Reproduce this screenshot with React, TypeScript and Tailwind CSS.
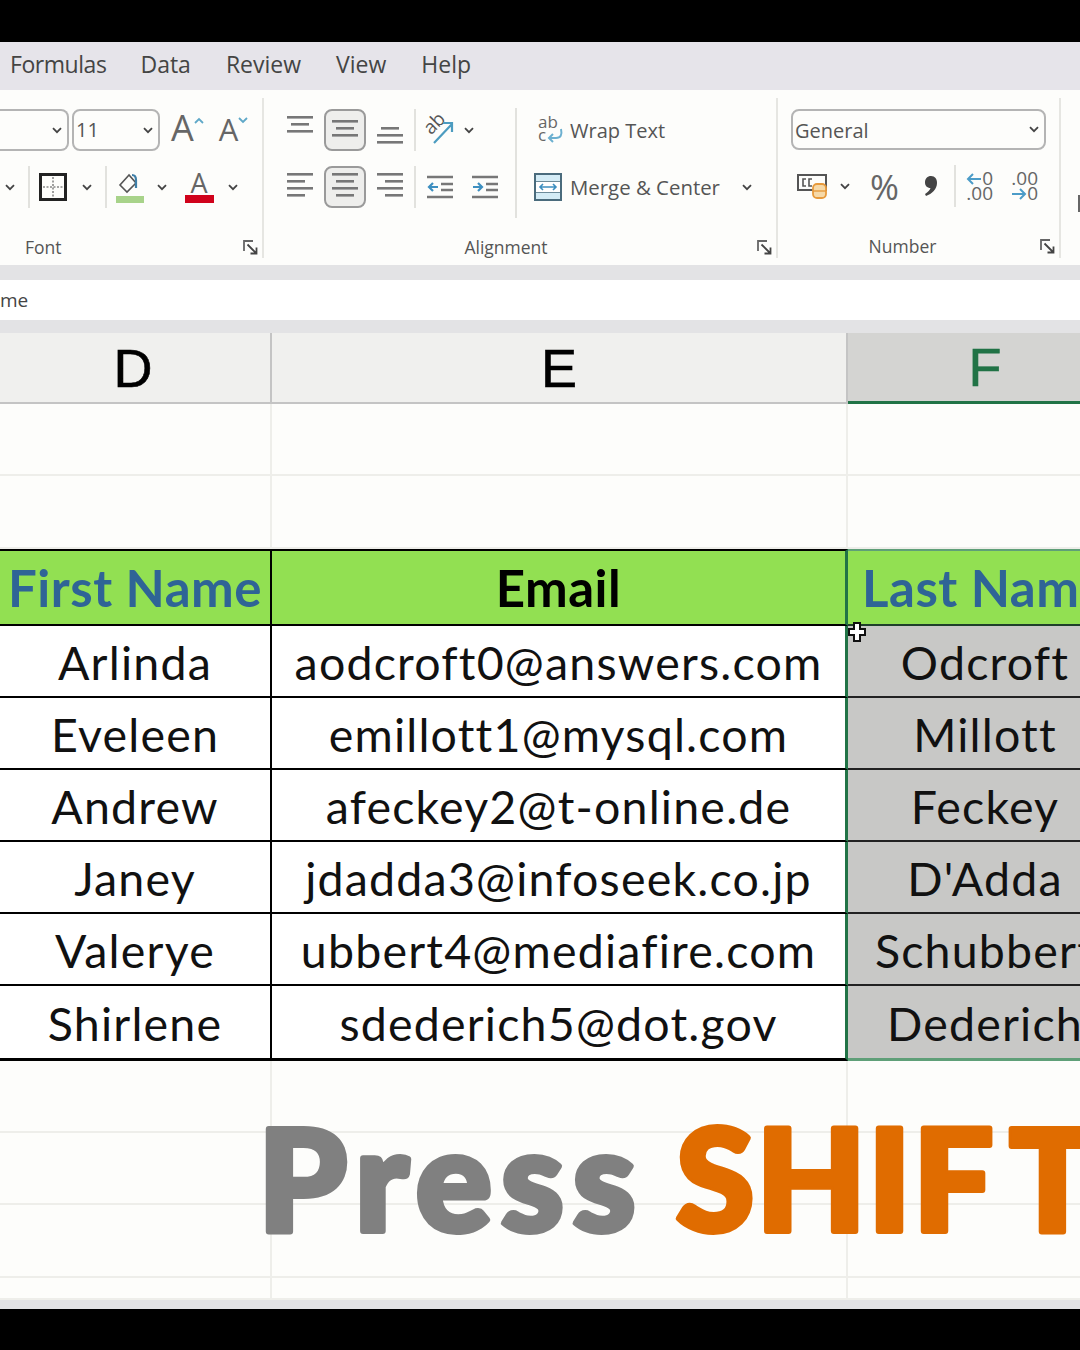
import React from 'react';

const Chevron = ({ className = '' }: { className?: string }) => (
  <svg width="10" height="7" viewBox="0 0 10 7" className={`shrink-0 ${className}`}>
    <path d="M1 1.2 L5 5.2 L9 1.2" fill="none" stroke="#444" strokeWidth="1.8" />
  </svg>
);

const Launcher = () => (
  <svg width="15" height="15" viewBox="0 0 15 15">
    <path d="M10 1 H1 V11" fill="none" stroke="#666" strokeWidth="1.8" />
    <path d="M4.5 4.5 L13.5 13.5 M13.5 7.5 V13.5 H7.5" fill="none" stroke="#444" strokeWidth="1.8" />
  </svg>
);

const Lines = ({ rows }: { rows: [number, number][] }) => (
  <svg width="26" height={rows.length * 7 + 2} viewBox={`0 0 26 ${rows.length * 7 + 2}`}>
    {rows.map(([x, w], i) => (
      <rect key={i} x={x} y={i * 7 + 1} width={w} height="2.6" fill="#777" />
    ))}
  </svg>
);

const Sep = ({ className = 'h-[42px]' }: { className?: string }) => <div className={`w-0.5 shrink-0 bg-[#e2e2de] ${className}`} />;

const Boxed = ({ children }: { children: React.ReactNode }) => (
  <div className="w-[42px] h-[42px] rounded-lg border-2 border-[#9a9a9a] bg-[#eeeeec] flex items-center justify-center">{children}</div>
);

const FontGroup = () => (
  <div className="w-[264px] h-[160px] mt-2 shrink-0 flex flex-col border-r-2 border-[#e6e6e2]">
    <div className="flex items-center h-[42px] mt-[11px]">
      <div className="w-[69px] h-[42px] rounded-r-lg border-2 border-l-0 border-[#b4b4b4] flex items-center justify-end pr-[5px] shrink-0">
        <Chevron />
      </div>
      <div className="w-[88px] h-[42px] ml-[3px] rounded-lg border-2 border-[#b4b4b4] flex items-center justify-between pl-[2px] pr-[5px] shrink-0">
        <span className="text-[20px] text-[#555]">11</span>
        <Chevron />
      </div>
      <span className="ml-[11px] mb-[5px] text-[36px] leading-none text-[#666]">A</span>
      <svg width="10" height="7" viewBox="0 0 10 7" className="mb-5">
        <path d="M1 6 L5 2 L9 6" fill="none" stroke="#5fa8c8" strokeWidth="1.8" />
      </svg>
      <span className="ml-[15px] mb-[1px] text-[31px] leading-none text-[#666]">A</span>
      <svg width="10" height="7" viewBox="0 0 10 7" className="mb-5">
        <path d="M1 1 L5 5 L9 1" fill="none" stroke="#5fa8c8" strokeWidth="1.8" />
      </svg>
    </div>
    <div className="flex items-center h-[42px] mt-[15px]">
      <Chevron className="ml-[5px]" />
      <Sep className="h-[42px] ml-[13px]" />
      <svg width="28" height="28" viewBox="0 0 28 28" className="ml-[9px]">
        <rect x="1.5" y="1.5" width="25" height="25" fill="none" stroke="#222" strokeWidth="3" />
        <path d="M14 4 V24 M4 14 H24" stroke="#888" strokeWidth="1.6" strokeDasharray="2 1.5" />
      </svg>
      <Chevron className="ml-[15px]" />
      <Sep className="h-[42px] ml-[13px]" />
      <div className="ml-[8px] w-[30px] flex flex-col items-center">
        <svg width="26" height="24" viewBox="0 0 26 24">
          <path d="M12 3 L3 13 L10 20 L19 11 Z" fill="none" stroke="#555" strokeWidth="1.6" />
          <path d="M19 16 V8 Q19 3 15 3" fill="none" stroke="#3f7fa8" strokeWidth="2.2" />
        </svg>
        <div className="w-7 h-[7px] bg-[#a8d38a]" />
      </div>
      <Chevron className="ml-[12px]" />
      <div className="ml-[17px] w-[30px] flex flex-col items-center">
        <span className="text-[27px] leading-[24px] text-[#666]">A</span>
        <div className="w-[29px] h-2 bg-[#d0021b]" />
      </div>
      <Chevron className="ml-[14px]" />
    </div>
    <div className="flex items-center justify-between mt-[27px] pl-[25px] pr-[4px]">
      <span className="text-[17.5px] leading-6 text-[#555]">Font</span>
      <Launcher />
    </div>
  </div>
);

const AlignmentGroup = () => (
  <div className="w-[514px] h-[160px] mt-2 shrink-0 flex flex-col border-r-2 border-[#e6e6e2]">
    <div className="flex h-[99px] mt-[11px]">
      <div className="flex flex-col w-[150px] pl-[23px] shrink-0">
        <div className="flex h-[42px]">
          <div className="pt-[6px]"><Lines rows={[[0, 26], [4, 18], [0, 26]]} /></div>
          <div className="ml-[11px]"><Boxed><Lines rows={[[0, 26], [4, 18], [0, 26]]} /></Boxed></div>
          <div className="ml-[11px] pt-[17px]"><Lines rows={[[4, 18], [0, 26], [0, 26]]} /></div>
        </div>
        <div className="flex h-[42px] items-center mt-[15px]">
          <Lines rows={[[0, 26], [0, 18], [0, 26], [0, 18]]} />
          <div className="ml-[11px]"><Boxed><Lines rows={[[0, 26], [4, 18], [0, 26], [4, 18]]} /></Boxed></div>
          <div className="ml-[11px]"><Lines rows={[[0, 26], [8, 18], [0, 26], [8, 18]]} /></div>
        </div>
      </div>
      <div className="flex flex-col shrink-0">
        <Sep />
        <Sep className="h-[42px] mt-[15px]" />
      </div>
      <div className="flex flex-col w-[99px] shrink-0 pl-[8px]">
        <div className="flex items-center h-[42px]">
          <svg width="32" height="34" viewBox="0 0 32 34" className="overflow-visible">
            <text x="0" y="18" fontSize="19" fill="#555" transform="rotate(-45 9 12)" fontFamily="Open Sans">ab</text>
            <path d="M10 30 L28 11 M19 10 H28 V19" fill="none" stroke="#4c9cc0" strokeWidth="2.2" />
          </svg>
          <Chevron className="ml-[8px]" />
        </div>
        <div className="flex items-center h-[42px] mt-[15px] pl-[3px]">
          <svg width="26" height="26" viewBox="0 0 26 26">
            <path d="M0 3 H26 M14 10 H26 M14 16 H26 M0 23 H26" stroke="#777" strokeWidth="2.6" />
            <path d="M11 13 H2 M6 9 L2 13 L6 17" fill="none" stroke="#3d8fc0" strokeWidth="2.2" />
          </svg>
          <svg width="26" height="26" viewBox="0 0 26 26" className="ml-[19px]">
            <path d="M0 3 H26 M14 10 H26 M14 16 H26 M0 23 H26" stroke="#777" strokeWidth="2.6" />
            <path d="M1 13 H10 M6 9 L10 13 L6 17" fill="none" stroke="#3d8fc0" strokeWidth="2.2" />
          </svg>
        </div>
      </div>
      <Sep className="h-[110px] -mt-px" />
      <div className="flex flex-col pl-[17px]">
        <div className="flex items-center h-[42px]">
          <svg width="28" height="30" viewBox="0 0 28 30" className="ml-[3px] overflow-visible">
            <text x="1" y="13" fontSize="17" fill="#666" fontFamily="Open Sans">ab</text>
            <text x="1" y="26" fontSize="17" fill="#666" fontFamily="Open Sans">c</text>
            <path d="M24 14 Q26 23 19 23 H12 M16 19 L12 23 L16 27" fill="none" stroke="#6cb0d0" strokeWidth="2" />
          </svg>
          <span className="ml-[5px] mt-[2px] text-[20px] leading-none text-[#555]">Wrap Text</span>
        </div>
        <div className="flex items-center h-[42px] mt-[15px]">
          <svg width="28" height="28" viewBox="0 0 28 28">
            <rect x="1" y="1" width="26" height="26" fill="#d4ecf6" stroke="#4a6b7c" strokeWidth="2" />
            <path d="M1 9 H27 M1 19 H27" stroke="#4a6b7c" strokeWidth="1.4" />
            <rect x="2" y="9" width="24" height="10" fill="#fff" />
            <path d="M6 14 H22 M9 11 L6 14 L9 17 M19 11 L22 14 L19 17" fill="none" stroke="#3d8fc0" strokeWidth="1.6" />
          </svg>
          <span className="ml-[8px] text-[20.4px] leading-none text-[#555]">Merge &amp; Center</span>
          <Chevron className="ml-[22px]" />
        </div>
      </div>
    </div>
    <div className="relative flex items-center justify-center mt-[27px] h-6">
      <span className="text-[17.5px] leading-6 text-[#555] mr-[28px]">Alignment</span>
      <div className="absolute right-[4px] top-[5px]"><Launcher /></div>
    </div>
  </div>
);

const NumberGroup = () => (
  <div className="w-[283px] h-[160px] mt-2 shrink-0 flex flex-col border-r-2 border-[#e6e6e2]">
    <div className="mt-[11px] ml-[13px] w-[255px] h-[42px] rounded-lg border-2 border-[#b4b4b4] flex items-center justify-between pl-[2px] pr-[5px]">
      <span className="text-[20px] mt-[2px] text-[#555]">General</span>
      <Chevron />
    </div>
    <div className="flex items-center h-[42px] mt-[15px] pl-[19px]">
      <svg width="31" height="28" viewBox="0 0 31 28" className="shrink-0">
        <rect x="1" y="3" width="28" height="15" fill="none" stroke="#555" strokeWidth="2" />
        <path d="M9 7 H6 V14 H9 M15 7 H12 V14 H15" fill="none" stroke="#555" strokeWidth="1.6" />
        <rect x="16" y="12" width="13" height="14" rx="4" fill="#f6d9a8" stroke="#e79a3c" strokeWidth="1.8" />
        <path d="M16 19 H29" stroke="#e79a3c" strokeWidth="1.4" />
      </svg>
      <Chevron className="ml-[12px]" />
      <span className="ml-[20px] w-[30px] shrink-0 text-[35px] leading-none text-[#666]">%</span>
      <svg width="14" height="22" viewBox="0 0 14 22" className="ml-[24px] shrink-0">
        <path d="M7 1 C11 1 13 4 13 8 C13 14 8 19 2 21 L1 19 C4 17 6 15 6.5 13 C3 13 1 10.5 1 7.5 C1 3.5 3.5 1 7 1 Z" fill="#444" />
      </svg>
      <Sep className="h-[42px] ml-[16px]" />
      <div className="ml-[7px] w-[30px] flex flex-col items-end text-[19px] leading-[15px] text-[#666] shrink-0">
        <span className="flex items-center">
          <svg width="16" height="12" viewBox="0 0 16 12"><path d="M15 6 H2 M7 1 L2 6 L7 11" fill="none" stroke="#4c9cc8" strokeWidth="2" /></svg>0
        </span>
        <span>.00</span>
      </div>
      <div className="ml-[15px] w-[30px] flex flex-col items-end text-[19px] leading-[15px] text-[#666] shrink-0">
        <span>.00</span>
        <span className="flex items-center">
          <svg width="16" height="12" viewBox="0 0 16 12"><path d="M1 6 H14 M9 1 L14 6 L9 11" fill="none" stroke="#4c9cc8" strokeWidth="2" /></svg>0
        </span>
      </div>
    </div>
    <div className="relative flex items-center justify-center mt-[27px] h-6">
      <span className="text-[17.5px] leading-6 text-[#555] mr-[32px]">Number</span>
      <div className="absolute right-[4px] top-[5px]"><Launcher /></div>
    </div>
  </div>
);

const rows = [
  ['Arlinda', 'aodcroft0@answers.com', 'Odcroft'],
  ['Eveleen', 'emillott1@mysql.com', 'Millott'],
  ['Andrew', 'afeckey2@t-online.de', 'Feckey'],
  ['Janey', 'jdadda3@infoseek.co.jp', "D'Adda"],
  ['Valerye', 'ubbert4@mediafire.com', 'Schubbert'],
  ['Shirlene', 'sdederich5@dot.gov', 'Dederich'],
];

const Blank = ({ h }: { h: string }) => (
  <div className={`grid grid-cols-[272px_576px_274px] ${h} border-b-2 border-[#eeeeea]`}>
    <div className="border-r-2 border-[#eeeeea]" />
    <div className="border-r-2 border-[#eeeeea]" />
    <div />
  </div>
);

export default function App() {
  return (
    <div className="w-[1080px] h-[1350px] overflow-hidden bg-black flex flex-col font-['Open_Sans',sans-serif]">
      <div className="h-[42px] shrink-0" />
      <div className="h-[48px] shrink-0 bg-[#e6e4ea] flex items-center pl-[10px] pb-1 gap-[35px] text-[23px] text-[#444]">
        <span className="-mr-px tracking-[-0.45px]">Formulas</span>
        <span>Data</span>
        <span>Review</span>
        <span>View</span>
        <span>Help</span>
      </div>
      <div className="h-[175px] shrink-0 bg-[#fdfdfb] flex overflow-hidden">
        <FontGroup />
        <AlignmentGroup />
        <NumberGroup />
        <div className="mt-[105px] ml-[17px] w-1 h-[17px] bg-[#666] shrink-0" />
      </div>
      <div className="h-[15px] shrink-0 bg-[#e3e3e5]" />
      <div className="h-[40px] shrink-0 bg-white flex items-center text-[19px] text-[#444]">me</div>
      <div className="h-[13px] shrink-0 bg-[#e3e3e5]" />
      <div className="h-[71px] shrink-0 grid grid-cols-[272px_576px_274px] bg-[#f0f0ee] font-['Liberation_Sans',sans-serif] text-[54px] leading-none [-webkit-text-stroke:0.6px_currentColor]">
        <div className="border-r-2 border-b-2 border-[#c4c4c4] flex items-center justify-center text-black">
          <span className="mr-[4px]">D</span>
        </div>
        <div className="border-r-2 border-b-2 border-[#c4c4c4] flex items-center justify-center text-black">
          <span>E</span>
        </div>
        <div className="bg-[#d4d4d2] border-b-[3px] border-[#217346] flex items-center justify-center text-[#217346]">F</div>
      </div>
      <div className="flex-1 bg-[#fdfdfb] font-['Lato',sans-serif]">
        <Blank h="h-[72px]" />
        <Blank h="h-[73px]" />
        <div className="relative">
          <div className="grid grid-cols-[272px_576px_274px] h-[77px] bg-[#92e052] text-[51px] tracking-[0.5px] font-bold leading-none whitespace-nowrap">
            <div className="border-t-2 border-b-2 border-r-2 border-black flex items-center justify-center text-[#2f6496]">First Name</div>
            <div className="border-t-2 border-b-2 border-black border-r-[3px] border-r-[#217346] flex items-center justify-center text-black">Email</div>
            <div className="border-t-2 border-t-[#5f9f78] border-b-2 border-b-[#1f3f2a] flex items-center pl-[14px] text-[#2f6496] overflow-hidden">Last Name</div>
          </div>
          {rows.map((r, i) => {
            const last = i === 5;
            return (
              <div key={r[0]} className={`grid grid-cols-[272px_576px_274px] ${last ? 'h-[75px]' : 'h-[72px]'} text-[46.5px] tracking-[1.2px] leading-none whitespace-nowrap text-[#111]`}>
                <div className={`border-r-2 border-black bg-white flex items-center justify-center pt-[2px] ${last ? 'border-b-[3px]' : 'border-b-2'}`}>{r[0]}</div>
                <div className={`border-b-black border-r-[3px] border-r-[#217346] bg-white flex items-center justify-center pt-[2px] ${last ? 'border-b-[3px]' : 'border-b-2'}`}>{r[1]}</div>
                <div className={`bg-[#c8c8c6] flex items-center justify-center pt-[2px] overflow-hidden ${last ? 'border-b-[3px] border-[#5f9f78]' : 'border-b-2 border-[#222]'}`}>{r[2]}</div>
              </div>
            );
          })}
          <svg width="20" height="22" viewBox="0 0 20 22" className="absolute left-[847px] top-[72px]">
            <path d="M7 2 H13 V8 H18 V14 H13 V20 H7 V14 H2 V8 H7 Z" fill="#fff" stroke="#111" strokeWidth="2" />
          </svg>
        </div>
        <Blank h="h-[72px]" />
        <div className="relative">
          <Blank h="h-[72px]" />
          <Blank h="h-[73px]" />
          <svg width="820" height="130" viewBox="0 0 820 130" className="absolute left-[260px] -top-[15px] font-['Lato',sans-serif] font-black">
            <text x="-2" y="113" fontSize="142" letterSpacing="9" fill="#808080" stroke="#808080" strokeWidth="6" strokeLinejoin="round" paintOrder="stroke">Press</text>
            <text x="416" y="113" fontSize="142" letterSpacing="2" fill="#e06c00" stroke="#e06c00" strokeWidth="6" strokeLinejoin="round" paintOrder="stroke">SHIF<tspan dx="14">T</tspan></text>
          </svg>
        </div>
        <Blank h="h-[22px] border-b-0" />
      </div>
      <div className="h-[9px] shrink-0 bg-[#e3e3e5]" />
      <div className="h-[42px] shrink-0" />
    </div>
  );
}
